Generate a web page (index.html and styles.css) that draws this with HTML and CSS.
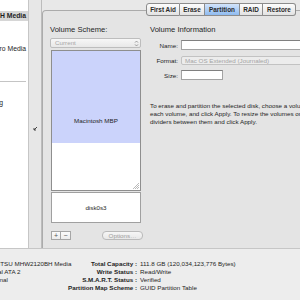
FILE: index.html
```html
<!DOCTYPE html>
<html>
  <head>
    <meta charset="UTF-8" />
    <title>Disk Utility - Partition</title>
    <link rel="stylesheet" href="styles.css">
  </head>
  <body>
    <div class="window">
      <div class="top">
        <div class="sidebar">
          <div class="row selected"><span>111.8 GB FUJITSU MHW2120BH Media</span></div>
          <div class="row volume-row"><span>MacBook Pro Media</span></div>
          <div class="sep"></div>
          <div class="row image-row"><span>Macintosh.dmg</span></div>
        </div>
        <div class="splitter">
          <svg width="5" height="5" viewBox="0 0 5 5"><path d="M4 1 L1.2 3.8 M1 2 V4 H3" stroke="#333" stroke-width="0.9" fill="none"/></svg>
        </div>
        <div class="main">
          <div class="tabs">
            <div class="tab" style="width:34px">First Aid</div>
            <div class="tab" style="width:25px">Erase</div>
            <div class="tab active" style="width:35px">Partition</div>
            <div class="tab" style="width:23px">RAID</div>
            <div class="tab" style="width:33px">Restore</div>
          </div>
          <div class="panel">
            <div class="scheme">
              <div class="heading">Volume Scheme:</div>
              <div class="popup disabled">
                <span>Current</span>
                <span class="arrows">
                  <svg width="5" height="7" viewBox="0 0 5 7"><path d="M1 2.6 L2.5 1 L4 2.6 M1 4.4 L2.5 6 L4 4.4" stroke="#8a8a8a" stroke-width="0.8" fill="none"/></svg>
                </span>
              </div>
              <div class="map">
                <div class="volume">Macintosh MBP</div>
                <div class="free"></div>
                <svg class="grip" width="6" height="6" viewBox="0 0 6 6"><path d="M6 0 L0 6 M6 2 L2 6 M6 4 L4 6" stroke="#9c9c9c" stroke-width="0.7"/></svg>
              </div>
              <div class="disk">disk0s3</div>
              <div class="buttons">
                <div class="sq">+</div>
                <div class="sq">&minus;</div>
                <div class="options">Options…</div>
              </div>
            </div>
            <div class="volinfo">
              <div class="heading">Volume Information</div>
              <div class="field">
                <label>Name:</label>
                <div class="text-input"></div>
              </div>
              <div class="field">
                <label>Format:</label>
                <div class="format-popup">Mac OS Extended (Journaled)</div>
              </div>
              <div class="field size">
                <label>Size:</label>
                <div class="text-input"></div>
              </div>
              <div class="note">
                To erase and partition the selected disk, choose a volume scheme from the pop-up menu, set options for<br>
                each volume, and click Apply. To resize the volumes on this disk, drag the<br>
                dividers between them and click Apply.
              </div>
            </div>
          </div>
        </div>
      </div>
      <div class="details">
        <span>FUJITSU MHW2120BH Media</span><b>Total Capacity :</b><span class="val">111.8 GB (120,034,123,776 Bytes)</span>
        <span>Serial ATA 2</span><b>Write Status :</b><span class="val">Read/Write</span>
        <span>Internal</span><b>S.M.A.R.T. Status :</b><span class="val">Verified</span>
        <span></span><b>Partition Map Scheme :</b><span class="val">GUID Partition Table</span>
      </div>
    </div>
  </body>
</html>
```

FILE: styles.css
```css
* {
  box-sizing: border-box;
}

body {
  margin: 0;
  width: 300px;
  height: 300px;
  overflow: hidden;
  font-family: "Liberation Sans", Arial, sans-serif;
  font-size: 6.25px;
  color: #1e1e1e;
  background: #e8e8e8;
}

.window {
  display: flex;
  flex-direction: column;
  height: 300px;
}

.top {
  display: flex;
  height: 248px;
}

/* source list */
.sidebar {
  width: 29px;
  flex-shrink: 0;
  background: #fff;
  border-right: 1px solid #c6c6c6;
  overflow: hidden;
  font-size: 6.8px;
}

.row {
  height: 10px;
  line-height: 10px;
  display: flex;
  justify-content: flex-end;
  white-space: nowrap;
  padding-right: 2px;
}

.row.selected {
  margin-top: 11px;
  background: #d6d6d6;
  font-weight: bold;
}

.volume-row {
  margin-top: 23px;
}

.sep {
  margin-top: 27px;
  width: 26px;
  height: 1px;
  background: #c4c4c4;
}

.image-row {
  margin-top: 16px;
  padding-right: 25px;
}

.splitter {
  width: 13px;
  flex-shrink: 0;
  background: #e7e7e7;
  border-right: 1px solid #bcbcbc;
  display: flex;
  justify-content: center;
  align-items: flex-start;
  padding-top: 126px;
}

.main {
  flex: 1;
  min-width: 0;
  display: flex;
  flex-direction: column;
  padding-top: 3px;
}

/* tab strip */
.tabs {
  display: flex;
  align-self: flex-end;
  margin-right: 4px;
  margin-bottom: -6px;
  height: 13px;
  position: relative;
  z-index: 1;
}

.tab {
  border: 1px solid #8c8c8c;
  border-left: none;
  background: linear-gradient(#fdfdfd, #e2e2e2);
  font-weight: bold;
  font-size: 6.4px;
  line-height: 11px;
  text-align: center;
  color: #2a2a2a;
}

.tab:first-child {
  border-left: 1px solid #8c8c8c;
  border-radius: 3px 0 0 3px;
}

.tab:last-child {
  border-radius: 0 3px 3px 0;
}

.tab.active {
  background: linear-gradient(#d2e4fb, #8fbbf0);
}

.panel {
  flex: 1;
  display: flex;
  margin-right: -10px;
  border: 1px solid #ababab;
  border-bottom: none;
  border-radius: 4px 0 0 0;
  background: #e4e4e4;
  padding: 14px 0 0 7px;
}

.heading {
  font-size: 7.6px;
  line-height: 10px;
  height: 10px;
  white-space: nowrap;
}

/* left column */
.scheme {
  width: 91px;
  flex-shrink: 0;
  display: flex;
  flex-direction: column;
}

.popup {
  margin-top: 3px;
  height: 10px;
  border: 1px solid #bdbdbd;
  border-radius: 2px;
  background: linear-gradient(#f7f7f7, #e8e8e8);
  color: #a8a8a8;
  padding: 0 1px 0 4px;
  line-height: 8px;
  display: flex;
  justify-content: space-between;
  align-items: center;
}

.arrows {
  display: flex;
}

.map {
  margin: 2px 0 0 1px;
  width: 90px;
  height: 141px;
  border: 1px solid #8e8e8e;
  background: #fff;
  display: flex;
  flex-direction: column;
  position: relative;
}

.volume {
  height: 92px;
  background: #cbd3fb;
  display: flex;
  align-items: flex-end;
  justify-content: center;
  padding-bottom: 18px;
  line-height: 8px;
}

.grip {
  position: absolute;
  right: 1px;
  bottom: 1px;
}

.disk {
  margin: 1px 0 0 1px;
  width: 90px;
  height: 31px;
  border: 1px solid #a0a0a0;
  background: #fff;
  display: flex;
  align-items: center;
  justify-content: center;
}

.buttons {
  margin-top: 8px;
  display: flex;
  height: 8px;
  padding-left: 1px;
}

.sq {
  width: 10px;
  height: 9px;
  border: 1px solid #a6a6a6;
  background: linear-gradient(#fbfbfb, #ececec);
  color: #555;
  font-size: 7px;
  line-height: 7px;
  text-align: center;
}

.sq + .sq {
  border-left: none;
}

.options {
  margin-left: auto;
  margin-right: -2px;
  width: 41px;
  height: 9px;
  border: 1px solid #bababa;
  border-radius: 4px;
  background: linear-gradient(#f6f6f6, #e8e8e8);
  color: #9d9d9d;
  line-height: 7px;
  text-align: center;
}

/* right column */
.volinfo {
  flex: 1;
  margin-left: 9px;
}

.field {
  display: flex;
  align-items: center;
  height: 10px;
  margin-top: 5px;
}

.field label {
  width: 28px;
  text-align: right;
  margin-right: 3px;
  white-space: nowrap;
}

.text-input {
  flex: 1;
  height: 10px;
  border: 1px solid #a3a3a3;
  border-top-color: #808080;
  background: #fff;
}

.field.size .text-input {
  flex: none;
  width: 42px;
}

.format-popup {
  flex: 1;
  height: 9px;
  border: 1px solid #c2c2c2;
  border-radius: 2px;
  background: #ececec;
  color: #a4a4a4;
  padding-left: 3px;
  line-height: 7px;
  white-space: nowrap;
}

.note {
  margin-top: 22px;
  line-height: 8px;
  white-space: nowrap;
}

/* disk description */
.details {
  flex: 1;
  margin-left: -13px;
  border-top: 1px solid #c6c6c6;
  background: #ededed;
  display: grid;
  grid-template-columns: 81px 69px 1fr;
  grid-auto-rows: 8px;
  line-height: 8px;
  padding-top: 11px;
  white-space: nowrap;
}

.details b {
  text-align: right;
}

.details .val {
  padding-left: 3px;
}
```
